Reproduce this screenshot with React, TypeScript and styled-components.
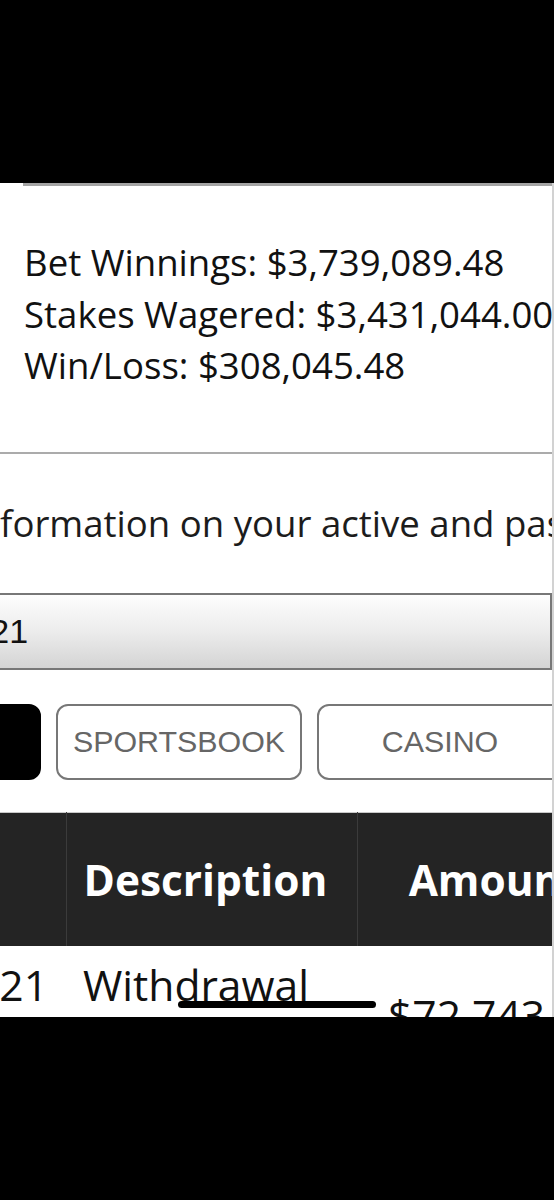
import { type FC } from 'react';
import styled, { createGlobalStyle } from 'styled-components';

const GlobalStyle = createGlobalStyle`
  html, body {
    margin: 0;
    padding: 0;
    background: #000;
  }
  body {
    font-family: 'Open Sans', 'Liberation Sans', sans-serif;
  }
`;

const Phone = styled.div`
  width: 554px;
  height: 1200px;
  padding: 183px 0;
  box-sizing: border-box;
  background: #000;
`;

const Screen = styled.main`
  position: relative;
  height: 834px;
  overflow: hidden;
  background: #fff;
  border-right: 2px solid #d2d2d2;
  color: #111;
`;

const StatsCard = styled.section`
  margin-left: 23px;
  padding: 51px 0 60px 1px;
  border-top: 3px solid #a4a4a4;
  white-space: nowrap;
`;

const StatLine = styled.p`
  margin: 0;
  font-size: 36.6px;
  line-height: 51.5px;
`;

const Divider = styled.hr`
  margin: 0;
  border: 0;
  border-top: 2px solid #ababab;
`;

const Intro = styled.p`
  margin: 43px 0 0 -121px;
  font-size: 36.6px;
  line-height: 52px;
  white-space: nowrap;
  color: #1c1c1c;
`;

const DateSelect = styled.div`
  display: flex;
  align-items: center;
  height: 77px;
  margin: 44px 0 0 -200px;
  padding-left: 58px;
  box-sizing: border-box;
  border: 2px solid #777;
  border-left: 0;
  background: linear-gradient(#fdfdfd, #ececec 50%, #d4d4d4);
  font-family: 'Liberation Sans', Arial, sans-serif;
  font-size: 34px;
  color: #111;
  white-space: nowrap;
`;

const Filters = styled.div`
  display: flex;
  gap: 15px;
  margin: 34px 0 0 -205px;
`;

const FilterButton = styled.button<{ $active?: boolean }>`
  flex: 0 0 246px;
  height: 76px;
  border: 2px solid ${(p) => (p.$active ? '#000' : '#777')};
  border-radius: 12px;
  background: ${(p) => (p.$active ? '#000' : '#fff')};
  color: ${(p) => (p.$active ? '#fff' : '#666')};
  font-family: 'Liberation Sans', Arial, sans-serif;
  font-size: 30.4px;
  padding: 0;
`;

const Table = styled.table`
  margin: 32px 0 0 -234px;
  border-collapse: collapse;
  table-layout: fixed;
  width: 861px;
  border-top: 1px solid #c8c8c8;
`;

const HeadCell = styled.th<{ $align?: string; $pad?: string }>`
  height: 133px;
  padding: ${(p) => p.$pad || '0 17px'};
  background: #242424;
  border-left: 1px solid #3b3b3b;
  color: #fff;
  font-size: 42.4px;
  font-weight: 700;
  text-align: ${(p) => p.$align || 'left'};
  white-space: nowrap;
  &:first-child {
    border-left: 0;
  }
`;

const Cell = styled.td<{ $align?: string; $pad?: string }>`
  padding: ${(p) => p.$pad || '8px 17px 0'};
  font-size: 42.6px;
  line-height: 60px;
  text-align: ${(p) => p.$align || 'left'};
  vertical-align: middle;
  white-space: nowrap;
  color: #111;
`;

const HomeIndicator = styled.div`
  position: absolute;
  left: 178px;
  top: 818px;
  width: 198px;
  height: 7px;
  border-radius: 4px;
  background: #000;
`;

const App: FC = () => {
  return (
    <>
      <GlobalStyle />
      <Phone>
        <Screen>
          <StatsCard>
            <StatLine>Bet Winnings: $3,739,089.48</StatLine>
            <StatLine>Stakes Wagered: $3,431,044.00</StatLine>
            <StatLine>Win/Loss: $308,045.48</StatLine>
          </StatsCard>
          <Divider />
          <Intro>View information on your active and past transactions</Intro>
          <DateSelect>12/31/2021</DateSelect>
          <Filters>
            <FilterButton $active>ALL</FilterButton>
            <FilterButton>SPORTSBOOK</FilterButton>
            <FilterButton>CASINO</FilterButton>
          </Filters>
          <Table>
            <colgroup>
              <col style={{ width: 300 }} />
              <col style={{ width: 291 }} />
              <col style={{ width: 270 }} />
            </colgroup>
            <thead>
              <tr>
                <HeadCell>Date</HeadCell>
                <HeadCell>Description</HeadCell>
                <HeadCell $pad="0 17px 0 21px" $align="center">
                  Amount
                </HeadCell>
              </tr>
            </thead>
            <tbody>
              <tr>
                <Cell $align="right" $pad="8px 18px 0 17px">
                  12/31/2021
                  <br />
                  10:42 PM
                </Cell>
                <Cell>
                  Withdrawal
                  <br />
                  Online Banking
                </Cell>
                <Cell $pad="8px 17px 0 31px">$72,743.00</Cell>
              </tr>
            </tbody>
          </Table>
          <HomeIndicator />
        </Screen>
      </Phone>
    </>
  );
};

export default App;
